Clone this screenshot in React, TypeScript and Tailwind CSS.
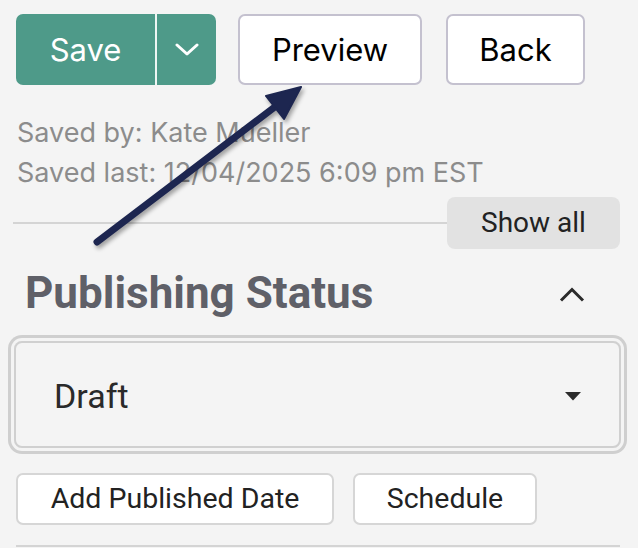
import React from 'react';

function ChevronDown({ className }: { className?: string }) {
  return (
    <svg viewBox="0 0 24 12" className={className} fill="none" stroke="currentColor" strokeWidth="3" strokeLinecap="round" strokeLinejoin="round">
      <path d="M2 1.5 L12 10.5 L22 1.5" />
    </svg>
  );
}

function Arrow() {
  // annotation arrow drawn over the page
  return (
    <svg
      className="absolute left-0 top-0 pointer-events-none drop-shadow-[2px_3px_2px_rgba(0,0,0,0.35)]"
      width="638"
      height="548"
      viewBox="0 0 638 548"
    >
      <line x1="97" y1="242" x2="280" y2="103" stroke="#1d2650" strokeWidth="7" strokeLinecap="round" />
      <polygon points="301,87 266,96 284,119" fill="#1d2650" stroke="#1d2650" strokeWidth="2" strokeLinejoin="round" />
    </svg>
  );
}

export default function App() {
  return (
    <div className="relative w-[638px] h-[548px] overflow-hidden bg-[#f4f4f4] font-['Inter',sans-serif]">
      <div className="pl-4 pt-[14px] pr-[18px]">
        {/* actions */}
        <div className="flex items-center h-[71px]">
          <div className="flex h-full w-[200px] rounded-[7px] bg-[#4e9a89] text-white overflow-hidden">
            <button className="w-[139px] h-full text-[31px] leading-none">Save</button>
            <div className="w-[2px] h-full bg-[#eef5f3]" />
            <button className="flex-1 h-full flex items-center justify-center">
              <ChevronDown className="w-[24px] h-[13px]" />
            </button>
          </div>
          <button className="ml-[22px] w-[184px] h-full rounded-[7px] border-2 border-[#c4c1cf] bg-white text-[31px] leading-none text-black">
            Preview
          </button>
          <button className="ml-[24px] w-[139px] h-full rounded-[7px] border-2 border-[#c4c1cf] bg-white text-[31px] leading-none text-black">
            Back
          </button>
        </div>

        {/* save info */}
        <div className="mt-[28px] pl-[1px] text-[27px] leading-[40px] text-[#8c8c8c]">
          <div>Saved by: Kate Mueller</div>
          <div>Saved last: 12/04/2025 6:09 pm EST</div>
        </div>

        <div className="mt-[4px] flex items-center -ml-[3px]">
          <div className="flex-1 h-[2px] bg-[#d4d4d4]" />
          <button className="w-[173px] h-[52px] rounded-[8px] bg-[#e2e2e2] text-[28px] leading-none text-[#222] font-['Roboto',sans-serif]">
            Show all
          </button>
        </div>

        {/* publishing status */}
        <div className="mt-[19px] flex items-center justify-between pl-[9px] pr-[35px] font-['Roboto',sans-serif]">
          <h2 className="text-[44px] leading-[50px] font-bold text-[#5f6068]">Publishing Status</h2>
          <svg viewBox="0 0 26 15" className="w-[26px] h-[15px] mt-[2px]" fill="none" stroke="#2b2b2b" strokeWidth="3" strokeLinejoin="miter">
            <path d="M2 13.5 L13 2.5 L24 13.5" />
          </svg>
        </div>

        <div className="mt-[23px] -ml-[2px] w-[607px] h-[107px] rounded-[8px] border-2 border-[#d0d0d0] shadow-[0_0_0_3px_#f4f4f4,0_0_0_6px_#cfcfcf] flex items-center justify-between pl-[38px] pr-[38px] font-['Roboto',sans-serif]">
          <span className="text-[34px] leading-none text-[#2a2a2a] mt-[3px]">Draft</span>
          <svg viewBox="0 0 16 9" className="w-[16px] h-[9px] mt-[3px]">
            <polygon points="0,0 16,0 8,8.5" fill="#2b2b2b" />
          </svg>
        </div>

        <div className="mt-[25px] flex gap-[19px] font-['Roboto',sans-serif]">
          <button className="w-[318px] h-[52px] rounded-[7px] border-2 border-[#d6d6d6] bg-white text-[28.5px] leading-none text-[#222]">
            Add Published Date
          </button>
          <button className="w-[184px] h-[52px] rounded-[7px] border-2 border-[#d6d6d6] bg-white text-[28.5px] leading-none text-[#222]">
            Schedule
          </button>
        </div>

        <div className="mt-[20px] w-[604px] h-[2px] bg-[#d4d4d4]" />
      </div>
      <Arrow />
    </div>
  );
}
